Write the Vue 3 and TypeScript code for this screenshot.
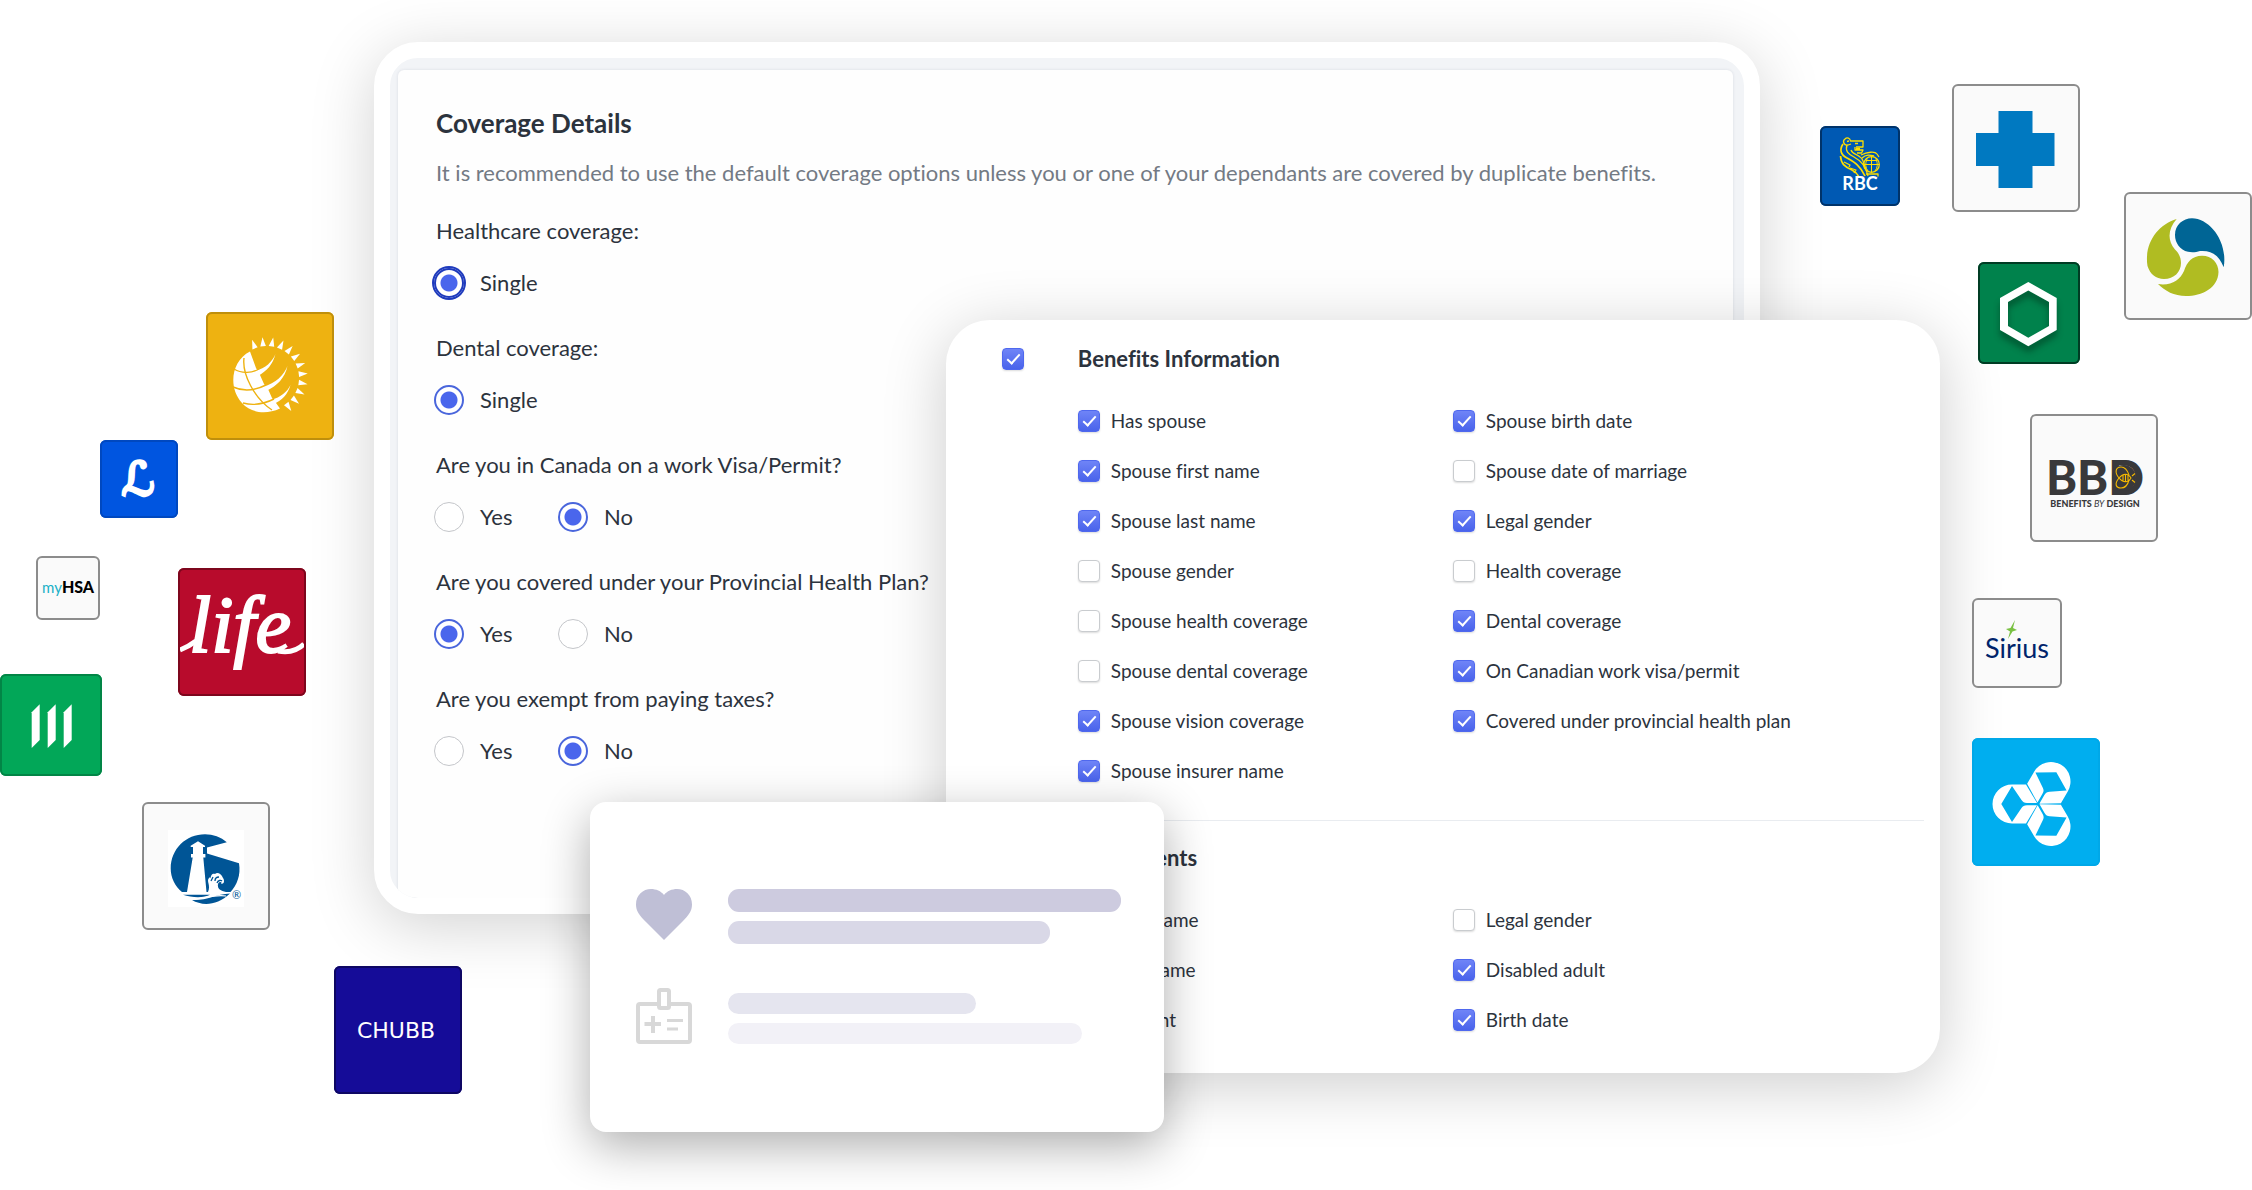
<script setup lang="ts">
import { ref } from 'vue'

interface Choice {
  label: string
  value: string
}
interface Question {
  id: string
  prompt: string
  choices: Choice[]
  answer: string
  focused?: boolean
}
interface Field {
  id: string
  label: string
  on: boolean
}
interface Group {
  id: string
  title: string
  on: boolean
  columns: Field[][]
}

const single: Choice[] = [{ label: 'Single', value: 'single' }]
const yesNo: Choice[] = [
  { label: 'Yes', value: 'yes' },
  { label: 'No', value: 'no' },
]

const questions = ref<Question[]>([
  { id: 'healthcare', prompt: 'Healthcare coverage:', choices: single, answer: 'single', focused: true },
  { id: 'dental', prompt: 'Dental coverage:', choices: single, answer: 'single' },
  { id: 'visa', prompt: 'Are you in Canada on a work Visa/Permit?', choices: yesNo, answer: 'no' },
  { id: 'provincial', prompt: 'Are you covered under your Provincial Health Plan?', choices: yesNo, answer: 'yes' },
  { id: 'tax', prompt: 'Are you exempt from paying taxes?', choices: yesNo, answer: 'no' },
])

const groups = ref<Group[]>([
  {
    id: 'benefits',
    title: 'Benefits Information',
    on: true,
    columns: [
      [
        { id: 'has-spouse', label: 'Has spouse', on: true },
        { id: 'spouse-first', label: 'Spouse first name', on: true },
        { id: 'spouse-last', label: 'Spouse last name', on: true },
        { id: 'spouse-gender', label: 'Spouse gender', on: false },
        { id: 'spouse-health', label: 'Spouse health coverage', on: false },
        { id: 'spouse-dental', label: 'Spouse dental coverage', on: false },
        { id: 'spouse-vision', label: 'Spouse vision coverage', on: true },
        { id: 'spouse-insurer', label: 'Spouse insurer name', on: true },
      ],
      [
        { id: 'spouse-birth', label: 'Spouse birth date', on: true },
        { id: 'marriage', label: 'Spouse date of marriage', on: false },
        { id: 'legal-gender', label: 'Legal gender', on: true },
        { id: 'health', label: 'Health coverage', on: false },
        { id: 'dental-cov', label: 'Dental coverage', on: true },
        { id: 'work-visa', label: 'On Canadian work visa/permit', on: true },
        { id: 'provincial-plan', label: 'Covered under provincial health plan', on: true },
      ],
    ],
  },
  {
    id: 'dependents',
    title: 'Dependents',
    on: true,
    columns: [
      [
        { id: 'dep-first', label: 'First name', on: true },
        { id: 'dep-last', label: 'Last name', on: true },
        { id: 'dep-student', label: 'Student', on: true },
      ],
      [
        { id: 'dep-gender', label: 'Legal gender', on: false },
        { id: 'dep-disabled', label: 'Disabled adult', on: true },
        { id: 'dep-birth', label: 'Birth date', on: true },
      ],
    ],
  },
])

const heartBars = [
  { width: 100, color: '#cdcbdf' },
  { width: 82, color: '#d9d8e7' },
]
const badgeBars = [
  { width: 63, color: '#e5e5ef' },
  { width: 90, color: '#f2f1f7' },
]

// twelve rays fanned clockwise round the globe
const rays = Array.from({ length: 12 }, (_, i) => -112 + i * 15)
const lobes = [0, 120, 240]
const slats = [0, 16, 32]
</script>

<template>
  <main class="scene">
    <aside class="cluster cluster-left" aria-label="Insurers">
      <div class="tile tile-sun">
        <svg viewBox="0 0 128 128">
          <path fill="#fff" d="M44 39.5 L50 56 L54 63 L58 72 L62 77 L66 86 L70 91 L74 96.5 C60 103 45 101 36 91 C22 76 25 49 44 39.5Z" />
          <path fill="#fff" d="M49 59 C60 56 66 50 69.5 42 C67 52 61 59 52 64Z M57 75 C70 71 78 63 81.5 54 C79 66 71 74 60 79Z M65 88 C75 85 81 80 84.5 73 C82 82 76 89 67 92Z" />
          <g fill="none" stroke="#eeb211" stroke-width="1.4">
            <path d="M28 57 C36 62 46 61 53 57" />
            <path d="M27 75 C38 80 50 78 60 73" />
            <path d="M37 91 C48 94 60 91 68 87" />
            <path d="M38 46 C36 62 48 86 66 98" />
          </g>
          <polygon v-for="a in rays" :key="a" fill="#fff" points="93,63.2 93,68.8 102,66.5" :transform="`rotate(${a} 61 66)`" />
        </svg>
      </div>
      <div class="tile tile-script">
        <svg viewBox="0 0 78 78">
          <text class="script-l" x="38" y="55" text-anchor="middle">ℒ</text>
        </svg>
      </div>
      <div class="tile tile-hsa">
        <svg viewBox="0 0 64 64">
          <text x="6" y="37"><tspan class="my">my</tspan><tspan class="hsa">HSA</tspan></text>
        </svg>
      </div>
      <div class="tile tile-life">
        <svg viewBox="0 0 128 128">
          <path fill="none" stroke="#fff" stroke-width="5" d="M2 82 Q10 79 18 73 M100 83 Q116 86 126 76" />
          <text class="life" x="62" y="84" text-anchor="middle">life</text>
        </svg>
      </div>
      <div class="tile tile-slats">
        <svg viewBox="0 0 102 102">
          <polygon v-for="x in slats" :key="x" fill="#fff" points="31.7,38.3 39.7,30.3 39.7,66 31.7,74" :transform="`translate(${x} 0)`" />
        </svg>
      </div>
      <div class="tile tile-lighthouse">
        <svg viewBox="0 0 128 128">
          <rect x="26" y="28" width="76" height="77" fill="#fff" />
          <path fill="#005596" d="M84.8 40.3 L65 45.5 V51.5 L97 61.3 C99 73 95 83 88.5 90 H40 C33 84 28.7 76 28.7 66.5 C28.7 47 44 32.3 63 32.3 C71 32.3 79 35 84.8 40.3Z" />
          <path fill="#fff" d="M48.7 43.8 L56 39.3 L63 43.8 V45 H61 V52 H63.4 V55.4 H61.3 L64.5 90 H45 L50.7 55.4 H49 V52 H51 V45 H48.7Z" />
          <path fill="#fff" d="M66 90 C69 83 64 79 67 76 C68 75 69 76 69 77 C68 73 71 71 73 72 C75 70 79 71 81 76 C83 79 82 82 79 82 C81 80 77 79 76 82 C75 87 79 89 84 90Z" />
          <path fill="none" stroke="#005596" stroke-width="1.3" d="M69 79 L71 75 M73 79 C73 76 75 75 77 75 M75 81 C76 78 79 78 80 79" />
          <path fill="#005596" d="M41 92.7 H68 C63 96 50 96 41 92.7Z M50 98 C64 99 74 92 88 91.5 C75 104 60 104 50 98Z" />
          <path fill="none" stroke="#fff" stroke-width="1.2" d="M48 97.6 C62 97 72 92 84 94" />
          <text class="reg" x="90" y="97">®</text>
        </svg>
      </div>
      <div class="tile tile-chubb">
        <svg viewBox="0 0 128 128">
          <text class="chubb" x="62" y="72" text-anchor="middle">CHUBB</text>
        </svg>
      </div>
    </aside>

    <section class="coverage">
      <form class="sheet">
        <h1 class="sheet-title">Coverage Details</h1>
        <p class="sheet-note">
          It is recommended to use the default coverage options unless you or one of your dependants are covered by duplicate benefits.
        </p>
        <fieldset v-for="q in questions" :key="q.id" class="question">
          <legend class="prompt">{{ q.prompt }}</legend>
          <div class="choices">
            <label v-for="c in q.choices" :key="c.value" class="choice">
              <input v-model="q.answer" type="radio" class="radio" :class="{ focused: q.focused }" :name="q.id" :value="c.value" />
              <span>{{ c.label }}</span>
            </label>
          </div>
        </fieldset>
      </form>
    </section>

    <section class="fields">
      <div v-for="g in groups" :key="g.id" class="group">
        <input :id="g.id" v-model="g.on" type="checkbox" class="check" />
        <label class="group-title" :for="g.id">{{ g.title }}</label>
        <div class="group-body">
          <div v-for="(column, i) in g.columns" :key="i">
            <label v-for="f in column" :key="f.id" class="field">
              <input v-model="f.on" type="checkbox" class="check" />
              <span>{{ f.label }}</span>
            </label>
          </div>
        </div>
      </div>
    </section>

    <section class="summary">
      <div class="summary-row">
        <svg class="icon-heart" viewBox="0 0 56 51">
          <path fill="#bfbfd6" d="M28 51 L10 33 C3 26 0 22 0 15.500 C0 6 7 0 15 0 C20 0 25 2 28 6 C31 2 36 0 41 0 C49 0 56 6 56 15.500 C56 22 53 26 46 33Z" />
        </svg>
        <div class="bars">
          <div v-for="b in heartBars" :key="b.width" class="bar" :style="{ width: b.width + '%', background: b.color }"></div>
        </div>
      </div>
      <div class="summary-row">
        <svg class="icon-badge" viewBox="0 0 56 56" fill="none" stroke="#d8d8d8" stroke-width="4">
          <rect x="2" y="16" width="52" height="38" rx="2" />
          <rect x="23" y="2" width="10" height="18" rx="1.5" fill="#fff" />
          <path d="M17 28 V45 M8.500 36 H25" />
          <path stroke-width="3" d="M31 32.500 H47 M31 41 H42" />
        </svg>
        <div class="bars">
          <div v-for="b in badgeBars" :key="b.width" class="bar" :style="{ width: b.width + '%', background: b.color }"></div>
        </div>
      </div>
    </section>

    <aside class="cluster cluster-right" aria-label="Partners">
      <div class="tile tile-rbc">
        <svg viewBox="0 0 80 80">
          <g fill="none" stroke="#fedf01" stroke-width="1.3" stroke-linejoin="round">
            <path d="M31 18 L28 19 C24 20 22 15 25 13 C27 11 30 12 30.500 15 H43 V21 H36 M27 15.500 L29 15 M38 17.500 H35" />
            <path d="M35 21 V24 H43 L41.500 27 H37 M36 22.500 H40" />
            <path d="M23 18 C19 24 21 29 27 32 C34 36 40 39 45 50" stroke-width="1.7" />
            <path d="M27 19 C25 25 28 28 34 31 C41 35 45 39 48 50" stroke-width="1.3" />
            <path d="M31 24 C32 28 37 28 40 31 C44 33 43 38 46 43" />
            <path d="M20.500 30 C21 38 25 41 32 44 C36 46 38 49 39 51" stroke-width="1.7" />
            <path d="M24 36 L30 39 L29 41 M30 42 L36 44 L34 47" />
            <path d="M41 29 C47 26 55 25 57 28 L59 31 M42 32 C46 28 50 29 54 30" />
            <circle cx="51.5" cy="38.5" r="7.8" />
            <path d="M51.500 31 V46 M44 38.500 H59 M47 33 Q44 40 48 45 M56 33 Q59 40 55 45 M46 34.500 H57" stroke-width="1" />
            <path d="M46 48 H58 V50.500" />
          </g>
          <text class="rbc" x="40" y="64" text-anchor="middle">RBC</text>
        </svg>
      </div>
      <div class="tile tile-pale tile-cross">
        <svg viewBox="0 0 128 128">
          <path fill="#0079c1" d="M46.500 27 H80.500 V49 H102.500 V82 H80.500 V104 H46.500 V82 H24 V49 H46.500Z" />
        </svg>
      </div>
      <div class="tile tile-pale tile-swirl">
        <svg viewBox="0 0 128 128">
          <path fill="#006595" d="M68 26.300 C86 26.500 104 50 99.700 75.300 C95 63 87 58 76 59 C72 60.500 67 60.500 64 59.800 C56 58 51 51 51 43 C51 33 59 26.300 68 26.300Z" />
          <path fill="#b0bc22" d="M52.700 27 C33 33 20 52 23.500 74 C26 82 32 87 40 87 C50 87 57 80 57 71 C57 66 55 61 51 57.500 C43 48 44 37 52.700 27Z" />
          <path fill="#b0bc22" d="M34 92 C47 94 56 88 60 79 C63 70 68 63.700 78 63.700 C88 63.700 94.500 71 94.500 80 C94 96 78 104 62 104 C50 104 41 99 34 92Z" />
        </svg>
      </div>
      <div class="tile tile-hex">
        <svg viewBox="0 0 102 102">
          <path class="hex" fill="#fff" fill-rule="evenodd" d="M50.300 20 L78.700 36 V68 L50.300 84.300 L22 68 V36Z M50.300 28.500 L30 40 V64 L50.300 75.700 L71 64 V40Z" />
        </svg>
      </div>
      <div class="tile tile-pale tile-bbd">
        <svg viewBox="0 0 128 128">
          <text class="bbd" x="65" y="81" text-anchor="middle">BBD</text>
          <ellipse cx="94" cy="64" rx="12" ry="13" fill="#39393b" />
          <g fill="none" stroke="#f6b900" stroke-width="1.1">
            <path d="M89 64 C84 58 86 53 91 53 C96 53 98 58 99 61 M89 64 C84 70 86 74 91 74 C96 74 98 70 99 66" />
            <path d="M89 64 C93 59 98 59 101 64 C98 69 93 69 89 64Z M93 61 V67 M95.500 60.500 V67.500 M98 61 V67" />
            <path d="M102 62 L105 59.500 M102 66 L105 68.500" />
          </g>
          <text class="bbd-sub" x="65" y="93" text-anchor="middle">BENEFITS <tspan class="by">BY</tspan> DESIGN</text>
        </svg>
      </div>
      <div class="tile tile-pale tile-sirius">
        <svg viewBox="0 0 90 90">
          <text class="sirius" x="45" y="60" text-anchor="middle">Sirius</text>
          <path fill="#7ac143" d="M43 22 L41 30 L45 32 L40.500 33.500 L36 41 L38 33.500 L34 31 L38.500 30Z" />
        </svg>
      </div>
      <div class="tile tile-lobes">
        <svg viewBox="0 0 128 128">
          <path
            v-for="a in lobes"
            :key="a"
            fill="#fff"
            :transform="`rotate(${a} 66 66)`"
            d="M40 46.500 H54 L65 65 H55 C52 65 51 64 49.500 62 L40 48 L29.300 66 L40 84 L49.500 70 C51 68 52 67.200 55 67.200 H65 L54 85.500 H40 A19.500 19.500 0 0 1 40 46.500Z"
          />
        </svg>
      </div>
    </aside>
  </main>
</template>

<style>
body {
  background: #fff;
}
</style>

<style scoped>
.scene {
  position: relative;
  box-sizing: border-box;
  min-height: 100vh;
  padding: 42px 492px 276px 374px;
  overflow: hidden;
  font-family: Lato, "Noto Sans", sans-serif;
  font-variant-ligatures: none;
  color: #2c333d;
}

.coverage {
  box-sizing: border-box;
  padding: 12px 11px 0 8px;
  overflow: hidden;
  background: #f2f4f7;
  border: 16px solid #fff;
  border-radius: 44px;
  box-shadow: 0 12px 64px rgba(0, 0, 0, 0.18);
}
.sheet {
  padding: 37px 38px 129px;
  background: #fefefe;
  border-radius: 6px 6px 0 0;
  box-shadow: 0 0 3px rgba(40, 50, 80, 0.12);
}
.sheet-title {
  margin: 0;
  font-size: 26px;
  font-weight: 700;
  line-height: 32px;
}
.sheet-note {
  margin: 18px 0 26px;
  font-size: 22px;
  line-height: 32px;
  color: #737a84;
  white-space: nowrap;
}
.question {
  min-width: 0;
  margin: 0 0 31px;
  padding: 0;
  border: 0;
}
.question:last-child {
  margin-bottom: 0;
}
.prompt {
  padding: 0;
  font-size: 22px;
  line-height: 32px;
}
.choices {
  display: flex;
  height: 36px;
  margin: 18px 0 0 -2px;
}
.choice {
  display: flex;
  align-items: center;
  gap: 16px;
  min-width: 124px;
  font-size: 22px;
  line-height: 32px;
}
.radio {
  box-sizing: border-box;
  width: 30px;
  height: 30px;
  margin: 0;
  appearance: none;
  background: #fff;
  border: 1px solid #c4c6ca;
  border-radius: 50%;
}
.radio:checked {
  background: radial-gradient(circle, #4a66ec 8px, #fff 9px);
  border: 2px solid #4a66dc;
}
.radio.focused {
  border-color: #1f3bbd;
  box-shadow: 0 0 0 2px #1f3bbd;
}

.fields {
  position: absolute;
  top: 320px;
  right: 312px;
  left: 42%;
  box-sizing: border-box;
  padding-bottom: 28px;
  background: #fff;
  border-radius: 44px;
  box-shadow: 0 12px 64px rgba(0, 0, 0, 0.2);
}
.group {
  display: grid;
  grid-template-columns: 76px 1fr;
  align-items: center;
  margin: 0 16px;
  padding: 25px 0 0 40px;
}
.group + .group {
  margin-top: 24px;
  padding-top: 23px;
  border-top: 1px solid #e9ecf0;
}
.group-title {
  font-size: 22px;
  font-weight: 700;
  line-height: 28px;
}
.group-body {
  display: grid;
  grid-template-columns: 375px 1fr;
  grid-column: 2;
  margin-top: 23px;
}
.field {
  display: flex;
  align-items: center;
  gap: 11px;
  height: 50px;
  font-size: 19px;
  line-height: 28px;
}
.check {
  position: relative;
  box-sizing: border-box;
  width: 22px;
  height: 22px;
  margin: 0;
  appearance: none;
  background: #fff;
  border: 1px solid #c9cccf;
  border-radius: 4px;
  box-shadow: 0 1px 2px rgba(0, 0, 0, 0.14);
}
.check:checked {
  background: linear-gradient(#6f84f7, #4963eb);
  border-color: #4f68ee;
}
.check:checked::after {
  position: absolute;
  top: 2px;
  left: 7px;
  box-sizing: border-box;
  width: 7px;
  height: 13px;
  border: solid #fff;
  border-width: 0 2px 2px 0;
  content: "";
  transform: rotate(42deg);
}

.summary {
  position: absolute;
  top: 802px;
  left: 590px;
  display: flex;
  flex-direction: column;
  gap: 44px;
  box-sizing: border-box;
  width: 574px;
  padding: 87px 43px 88px 46px;
  background: #fff;
  border-radius: 16px;
  box-shadow: 0 14px 48px rgba(0, 0, 0, 0.32);
}
.summary-row {
  display: flex;
  gap: 36px;
}
.summary-row:last-child {
  align-items: flex-end;
}
.icon-heart {
  flex: none;
  width: 56px;
  height: 51px;
}
.icon-badge {
  flex: none;
  width: 56px;
  height: 56px;
}
.bars {
  display: flex;
  flex: 1;
  flex-direction: column;
  gap: 9px;
}
.bar {
  height: 21px;
  border-radius: 11px;
}
.summary-row:first-child .bar {
  height: 23px;
}

.cluster-left {
  position: absolute;
  top: 0;
  left: 0;
}
.cluster-right {
  position: absolute;
  top: 0;
  right: 0;
}
.tile {
  position: absolute;
  width: 128px;
  overflow: hidden;
  outline: 2px solid;
  outline-offset: -2px;
  border-radius: 6px;
}
.tile svg {
  display: block;
  width: 100%;
}
.tile-pale {
  background: #fafafa;
  outline-color: #8c8c8c;
}
.tile-sun {
  top: 312px;
  left: 206px;
  background: #eeb211;
  outline-color: #bf8f0c;
}
.tile-script {
  top: 440px;
  left: 100px;
  width: 78px;
  background: #0055e0;
  outline-color: #0048bf;
}
.tile-hsa {
  top: 556px;
  left: 36px;
  width: 64px;
  background: #fafafa;
  outline-color: #8c8c8c;
}
.tile-life {
  top: 568px;
  left: 178px;
  background: #b80b2c;
  outline-color: #7d061d;
}
.tile-slats {
  top: 674px;
  left: 0;
  width: 102px;
  background: #02a758;
  outline-color: #028546;
}
.tile-lighthouse {
  top: 802px;
  left: 142px;
  background: #fafafa;
  outline-color: #8c8c8c;
}
.tile-chubb {
  top: 966px;
  left: 334px;
  background: #150c98;
  outline-color: #0e0763;
}
.tile-rbc {
  top: 126px;
  right: 352px;
  width: 80px;
  background: #0059b3;
  outline-color: #00336a;
}
.tile-cross {
  top: 84px;
  right: 172px;
}
.tile-swirl {
  top: 192px;
  right: 0;
}
.tile-hex {
  top: 262px;
  right: 172px;
  width: 102px;
  background: #00824c;
  outline-color: #003c24;
}
.hex {
  filter: drop-shadow(0 6px 3px rgba(0, 40, 20, 0.45));
}
.tile-bbd {
  top: 414px;
  right: 94px;
}
.tile-sirius {
  top: 598px;
  right: 190px;
  width: 90px;
}
.tile-lobes {
  top: 738px;
  right: 152px;
  background: #00aeef;
  outline-color: #00a8e8;
}

.script-l {
  font-family: "DejaVu Sans", sans-serif;
  font-size: 46px;
  fill: #fff;
  stroke: #fff;
  stroke-width: 3px;
}
.my {
  font-size: 15px;
  fill: #1bb0c6;
}
.hsa {
  font-size: 16px;
  font-weight: 900;
  fill: #000;
}
.life {
  font-family: "Liberation Serif", serif;
  font-size: 80px;
  font-style: italic;
  fill: #fff;
  stroke: #fff;
  stroke-width: 2px;
}
.reg {
  font-size: 11px;
  fill: #005596;
}
.chubb {
  font-family: "DejaVu Sans", sans-serif;
  font-size: 22px;
  fill: #fff;
}
.rbc {
  font-size: 18px;
  font-weight: 700;
  fill: #fff;
}
.bbd {
  font-size: 47px;
  font-weight: 900;
  fill: #39393b;
}
.bbd-sub {
  font-size: 9px;
  font-weight: 900;
  fill: #39393b;
}
.by {
  font-style: italic;
  font-weight: 400;
}
.sirius {
  font-size: 27px;
  fill: #00246b;
}
</style>
